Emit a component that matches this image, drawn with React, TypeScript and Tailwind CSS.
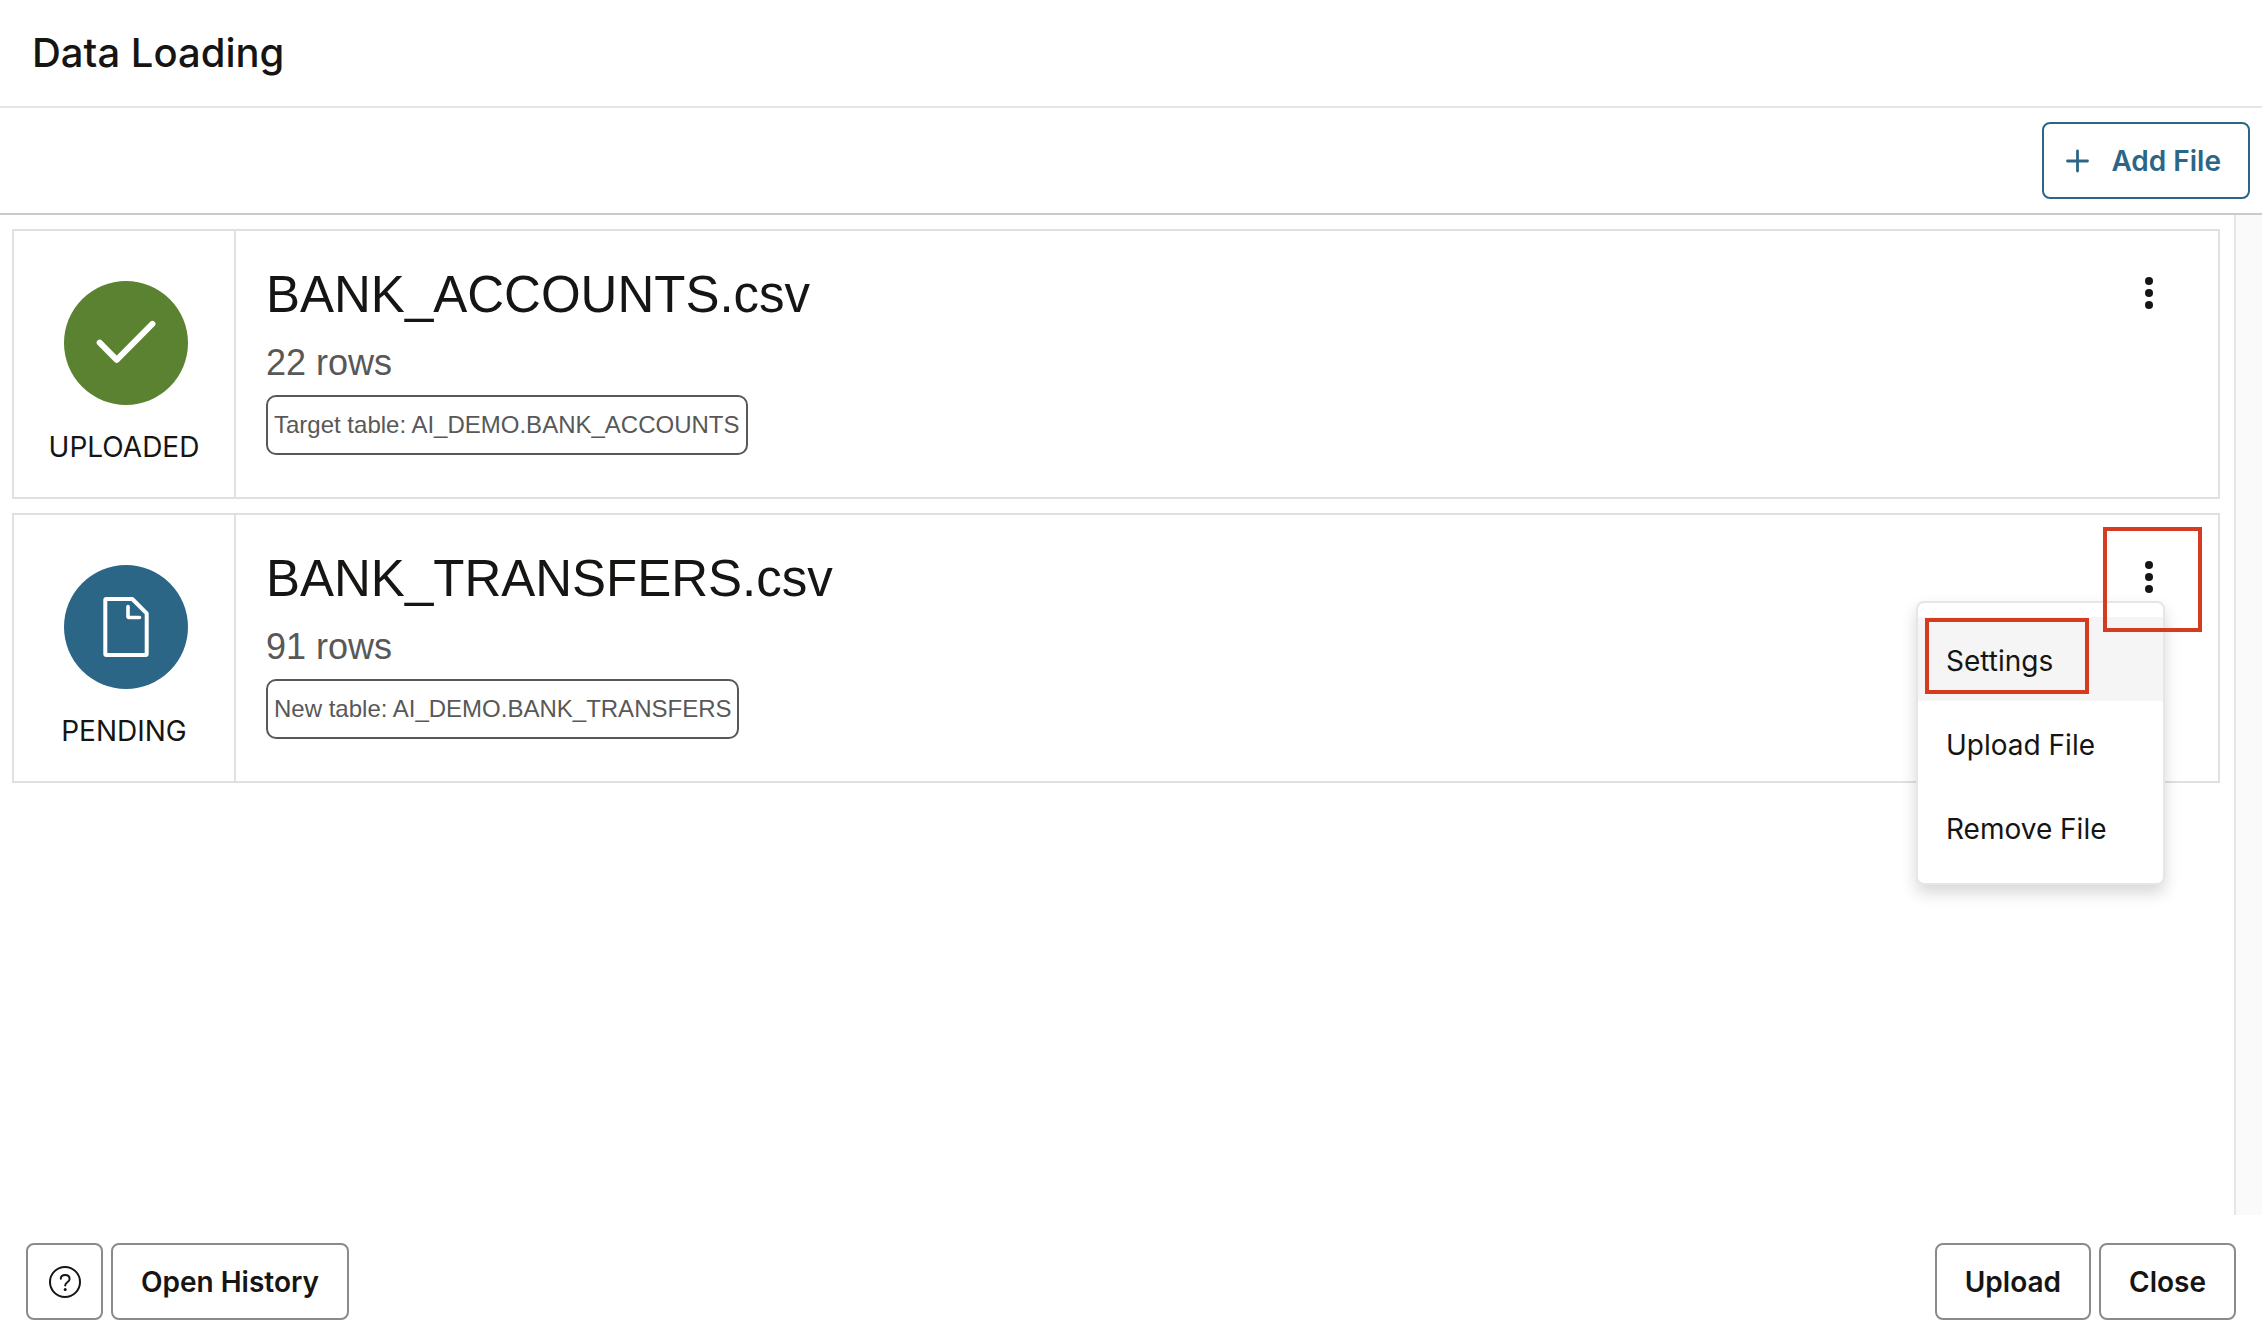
import type { ReactNode } from 'react'

type FileEntry = {
  name: string
  rows: string
  table: string
  status: 'UPLOADED' | 'PENDING'
  menuOpen: boolean
}

const files: FileEntry[] = [
  {
    name: 'BANK_ACCOUNTS.csv',
    rows: '22 rows',
    table: 'Target table: AI_DEMO.BANK_ACCOUNTS',
    status: 'UPLOADED',
    menuOpen: false,
  },
  {
    name: 'BANK_TRANSFERS.csv',
    rows: '91 rows',
    table: 'New table: AI_DEMO.BANK_TRANSFERS',
    status: 'PENDING',
    menuOpen: true,
  },
]

function UploadedIcon() {
  return (
    <svg viewBox="0 0 124 124" className="size-[124px]" fill="none" aria-hidden="true">
      <circle cx="62" cy="62" r="62" fill="#5b8231" />
      <path d="M35.7 61.7 52.7 78.9 88.4 42.9" stroke="#fff" strokeWidth="6" strokeLinecap="round" strokeLinejoin="round" />
    </svg>
  )
}

function PendingIcon() {
  return (
    <svg viewBox="0 0 124 124" className="size-[124px]" fill="none" aria-hidden="true">
      <circle cx="62" cy="62" r="62" fill="#2c6687" />
      <g stroke="#fff" strokeLinecap="round" strokeLinejoin="round">
        <path d="M42.3 34H68.3L82.7 48.3V89a1 1 0 0 1-1 1H42.3a1 1 0 0 1-1-1V35a1 1 0 0 1 1-1Z" strokeWidth="4" />
        <path d="M64 41.5V51.5a1 1 0 0 0 1 1H75.5" strokeWidth="3.6" />
      </g>
    </svg>
  )
}

function FileMenu() {
  return (
    <div
      role="menu"
      className="absolute top-full right-0 w-[249px] rounded-lg border-2 border-[#e6e6e6] bg-white py-3.5 shadow-[0_8px_16px_rgba(0,0,0,0.16)]"
    >
      <button role="menuitem" className="relative block h-[84px] w-full bg-[#f5f5f5] pt-1 pl-7 text-left">
        Settings
        <span className="absolute top-px left-[7px] h-[76px] w-[164px] border-4 border-[#d43b21]" />
      </button>
      <button role="menuitem" className="block h-[84px] w-full pt-1 pl-7 text-left">
        Upload File
      </button>
      <button role="menuitem" className="block h-[84px] w-full pt-1 pl-7 text-left">
        Remove File
      </button>
    </div>
  )
}

function FileCard({ file }: { file: FileEntry }) {
  return (
    <li className="flex border-2 border-[#e0e0e0]">
      <div className="flex w-[222px] shrink-0 flex-col items-center gap-[22px] border-r-2 border-[#e0e0e0] pt-[50px] pb-[30px] pl-1 leading-10">
        {file.status === 'UPLOADED' ? <UploadedIcon /> : <PendingIcon />}
        <span className="pr-1">{file.status}</span>
      </div>
      <div className="flex min-w-0 flex-1 flex-col items-start pt-8 pl-[30px] font-['Liberation_Sans',Arial,sans-serif]">
        <h2 className="text-[51px] leading-[64px]">{file.name}</h2>
        <p className="mt-3.5 text-4xl leading-[44px] text-[#585858]">{file.rows}</p>
        <span className="mt-2.5 flex h-[60px] items-center rounded-[10px] border-2 border-[#585858] px-1.5 text-2xl text-[#585858]">
          {file.table}
        </span>
      </div>
      <div className="relative mt-[38px] mr-[53px] h-12 w-8 shrink-0">
        <button aria-label={`Actions for ${file.name}`} aria-haspopup="menu" className="flex size-full items-center justify-center">
          <svg viewBox="0 0 8 32" className="h-8 w-2" fill="#161513" aria-hidden="true">
            <circle cx="4" cy="4" r="4" />
            <circle cx="4" cy="16" r="4" />
            <circle cx="4" cy="28" r="4" />
          </svg>
        </button>
        {file.menuOpen && (
          <>
            <FileMenu />
            <span className="pointer-events-none absolute -top-[26px] -left-[30px] h-[105px] w-[99px] border-4 border-[#d43b21]" />
          </>
        )}
      </div>
    </li>
  )
}

function FooterButton({ children }: { children: ReactNode }) {
  return (
    <button className="h-[77px] rounded-lg border-2 border-[#8b8b8b] px-7 font-semibold">{children}</button>
  )
}

export default function App() {
  return (
    <div className="flex min-h-screen flex-col bg-white font-[Inter,sans-serif] text-[28px] text-[#161513]">
      <header className="border-b-2 border-[#e5e5e5] px-8 py-[25px]">
        <h1 className="text-[40px] leading-[56px] font-medium">Data Loading</h1>
      </header>

      <div className="flex justify-end border-b-2 border-[#cacaca] py-3.5 pr-3">
        <button className="flex h-[77px] items-center gap-5 rounded-lg border-2 border-[#2c6687] pr-[27px] pl-[19px] font-semibold text-[#2c6687]">
          <svg viewBox="0 0 28 28" className="size-7" fill="none" stroke="currentColor" strokeWidth="2.8" strokeLinecap="round" aria-hidden="true">
            <path d="M14.5 4V24M4.5 14H24.5" />
          </svg>
          Add File
        </button>
      </div>

      <main className="flex flex-1">
        <ul className="flex flex-1 flex-col gap-3.5 py-3.5 pr-3.5 pl-3">
          {files.map((file) => (
            <FileCard key={file.name} file={file} />
          ))}
        </ul>
        <div className="w-7 border-l-2 border-[#e6e6e6] bg-[#fafafa]" />
      </main>

      <footer className="flex items-center justify-between px-[26px] pt-7 pb-[18px]">
        <div className="flex gap-2">
          <button aria-label="Help" className="flex size-[77px] items-center justify-center rounded-lg border-2 border-[#8b8b8b]">
            <svg viewBox="0 0 32 32" className="size-8" fill="none" stroke="currentColor" strokeWidth="2" aria-hidden="true">
              <circle cx="16" cy="16" r="15" />
              <path d="M11.8 12.8C11.8 10.6 13.6 9 16.2 9c2.6 0 4.4 1.6 4.4 4 0 3.2-4.4 3.2-4.4 6.4" strokeLinecap="round" />
              <circle cx="16.2" cy="23.5" r="1.5" fill="currentColor" stroke="none" />
            </svg>
          </button>
          <FooterButton>Open History</FooterButton>
        </div>
        <div className="flex gap-2">
          <FooterButton>Upload</FooterButton>
          <FooterButton>Close</FooterButton>
        </div>
      </footer>
    </div>
  )
}
